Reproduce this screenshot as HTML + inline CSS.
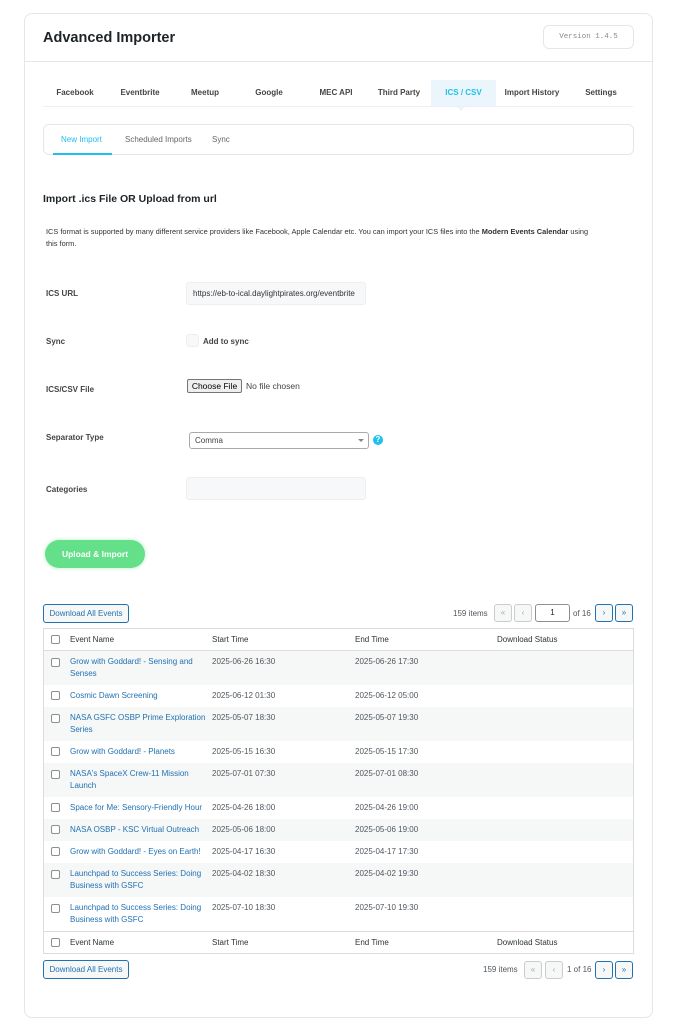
<!DOCTYPE html>
<html><head><meta charset="utf-8"><style>
*{box-sizing:border-box;margin:0;padding:0}
body{width:674px;height:1024px;background:#fff;font-family:"Liberation Sans",sans-serif;position:relative;overflow:hidden;color:#1d2327}
.a{position:absolute;white-space:nowrap}
.box{position:absolute;border:1px solid #e6e6e6;border-radius:6px}
.tab{position:absolute;top:88px;font-size:8px;font-weight:bold;color:#444;text-align:center}
.lbl{position:absolute;left:46px;font-size:8px;font-weight:bold;color:#444}
.inp{position:absolute;background:#f7f8f9;border:1px solid #eee;border-radius:3px}
.btn{position:absolute;border:1px solid #2271b1;border-radius:3px;color:#2271b1;background:#f6f7f7;font-size:8px;text-align:center}
.pg{position:absolute;width:18px;height:18px;border:1px solid #ccc;border-radius:3px;font-size:8px;text-align:center;line-height:16px;color:#a7aaad;background:#f6f7f7}
.pg.b{border-color:#2271b1;color:#2271b1}
.row{position:absolute;left:44px;width:589px;font-size:8px;color:#50575e}
.row.g{background:#f6f7f7}
.cb{position:absolute;left:7px;width:9px;height:9px;border:1px solid #8c8f94;border-radius:2px;background:#fff}
.row .n{position:absolute;left:26px;width:134px;color:#2271b1;line-height:12px;white-space:normal}
.row .s{position:absolute;left:168px}
.row .e{position:absolute;left:311px}
.row .d{position:absolute;left:453px}
</style></head><body>
<div class="box" style="left:24px;top:13px;width:629px;height:1005px;border-radius:8px"></div>
<div class="a" style="left:24px;top:61px;width:629px;border-top:1px solid #e6e6e6"></div>
<div class="a" style="left:43px;top:30px;font-size:14.5px;font-weight:bold;color:#1d2327">Advanced Importer</div>
<div class="box" style="left:543px;top:25px;width:91px;height:24px;font-family:'Liberation Mono',monospace;font-size:7.5px;color:#888;text-align:center;line-height:22px">Version 1.4.5</div>

<div class="a" style="left:431px;top:80px;width:65px;height:26px;background:#eaf6fc"></div>
<div class="a" style="left:456px;top:106px;width:0;height:0;border-left:5px solid transparent;border-right:5px solid transparent;border-top:5px solid #eaf6fc"></div>
<div class="a" style="left:43px;top:106px;width:590px;border-top:1px solid #eee"></div>
<div class="tab" style="left:50px;width:50px">Facebook</div>
<div class="tab" style="left:115px;width:50px">Eventbrite</div>
<div class="tab" style="left:180px;width:50px">Meetup</div>
<div class="tab" style="left:244px;width:50px">Google</div>
<div class="tab" style="left:311px;width:50px">MEC API</div>
<div class="tab" style="left:374px;width:50px">Third Party</div>
<div class="tab" style="left:431px;width:65px;color:#1ec1ec">ICS / CSV</div>
<div class="tab" style="left:500px;width:64px">Import History</div>
<div class="tab" style="left:576px;width:50px">Settings</div>

<div class="box" style="left:43px;top:124px;width:591px;height:31px"></div>
<div class="a" style="left:61px;top:135px;font-size:8px;color:#1ec1ec">New Import</div>
<div class="a" style="left:53px;top:153px;width:59px;height:2px;background:#1ec1ec"></div>
<div class="a" style="left:125px;top:135px;font-size:8px;color:#666">Scheduled Imports</div>
<div class="a" style="left:212px;top:135px;font-size:8px;color:#666">Sync</div>

<div class="a" style="left:43px;top:193px;font-size:10.5px;font-weight:bold">Import .ics File OR Upload from url</div>
<div class="a" style="left:46px;top:226px;font-size:7.4px;line-height:12px;color:#333">ICS format is supported by many different service providers like Facebook, Apple Calendar etc. You can import your ICS files into the <b>Modern Events Calendar</b> using<br>this form.</div>

<div class="lbl" style="top:289px">ICS URL</div>
<div class="inp" style="left:186px;top:282px;width:180px;height:23px;font-size:8px;line-height:21px;padding-left:6px;overflow:hidden;color:#333">https://eb-to-ical.daylightpirates.org/eventbrite</div>
<div class="lbl" style="top:337px">Sync</div>
<div class="inp" style="left:186px;top:334px;width:13px;height:13px"></div>
<div class="a" style="left:203px;top:337px;font-size:8px;font-weight:bold;color:#444">Add to sync</div>
<div class="lbl" style="top:385px">ICS/CSV File</div>
<div class="a" style="left:187px;top:379px;width:55px;height:14px;border:1px solid #767676;border-radius:2px;background:#efefef;font-size:8.5px;line-height:12px;text-align:center;color:#000">Choose File</div>
<div class="a" style="left:246px;top:381px;font-size:8.5px;color:#444">No file chosen</div>
<div class="lbl" style="top:433px">Separator Type</div>
<div class="a" style="left:189px;top:432px;width:180px;height:17px;border:1px solid #aaa;border-radius:3px;font-size:8px;line-height:15px;padding-left:5px;color:#444">Comma</div>
<div class="a" style="left:358px;top:439px;border-left:3px solid transparent;border-right:3px solid transparent;border-top:3px solid #888"></div>
<div class="a" style="left:373px;top:435px;width:10px;height:10px;border-radius:50%;background:#1ec1ec;color:#fff;font-size:8px;font-weight:bold;text-align:center;line-height:10px">?</div>
<div class="lbl" style="top:485px">Categories</div>
<div class="inp" style="left:186px;top:477px;width:180px;height:23px"></div>

<div class="a" style="left:45px;top:540px;width:100px;height:28px;border-radius:14px;background:#64e08a;box-shadow:0 0 4px #b6f0c6;color:#fff;font-size:8.5px;font-weight:bold;text-align:center;line-height:28px">Upload &amp; Import</div>

<div class="btn" style="left:43px;top:604px;width:86px;height:19px;line-height:17px">Download All Events</div>
<div class="a" style="left:453px;top:609px;font-size:8px;color:#50575e">159 items</div>
<div class="pg" style="left:494px;top:604px">«</div>
<div class="pg" style="left:514px;top:604px">‹</div>
<div class="a" style="left:535px;top:604px;width:35px;height:18px;border:1px solid #8c8f94;border-radius:3px;font-size:8px;text-align:center;line-height:16px">1</div>
<div class="a" style="left:573px;top:609px;font-size:8px;color:#50575e">of 16</div>
<div class="pg b" style="left:595px;top:604px">›</div>
<div class="pg b" style="left:615px;top:604px">»</div>

<div class="a" style="left:43px;top:628px;width:591px;height:326px;border:1px solid #dcdcde"></div>
<div class="row" style="top:629px;height:22px;border-bottom:1px solid #dcdcde;color:#2c3338"><div class="cb" style="top:6px"></div><span class="a" style="left:26px;top:6px">Event Name</span><span class="s" style="top:6px">Start Time</span><span class="e" style="top:6px">End Time</span><span class="d" style="top:6px">Download Status</span></div>

<div class="row g" style="top:651px;height:34px"><div class="cb" style="top:7px"></div><div class="n" style="top:5px">Grow with Goddard! - Sensing and Senses</div><span class="s" style="top:6px">2025-06-26 16:30</span><span class="e" style="top:6px">2025-06-26 17:30</span></div>
<div class="row" style="top:685px;height:22px"><div class="cb" style="top:6px"></div><div class="n" style="top:5px">Cosmic Dawn Screening</div><span class="s" style="top:6px">2025-06-12 01:30</span><span class="e" style="top:6px">2025-06-12 05:00</span></div>
<div class="row g" style="top:707px;height:34px"><div class="cb" style="top:7px"></div><div class="n" style="top:5px;white-space:nowrap">NASA GSFC OSBP Prime Exploration<br>Series</div><span class="s" style="top:6px">2025-05-07 18:30</span><span class="e" style="top:6px">2025-05-07 19:30</span></div>
<div class="row" style="top:741px;height:22px"><div class="cb" style="top:6px"></div><div class="n" style="top:5px">Grow with Goddard! - Planets</div><span class="s" style="top:6px">2025-05-15 16:30</span><span class="e" style="top:6px">2025-05-15 17:30</span></div>
<div class="row g" style="top:763px;height:34px"><div class="cb" style="top:7px"></div><div class="n" style="top:5px">NASA's SpaceX Crew-11 Mission Launch</div><span class="s" style="top:6px">2025-07-01 07:30</span><span class="e" style="top:6px">2025-07-01 08:30</span></div>
<div class="row" style="top:797px;height:22px"><div class="cb" style="top:6px"></div><div class="n" style="top:5px;overflow:hidden;white-space:nowrap">Space for Me: Sensory-Friendly Hour</div><span class="s" style="top:6px">2025-04-26 18:00</span><span class="e" style="top:6px">2025-04-26 19:00</span></div>
<div class="row g" style="top:819px;height:22px"><div class="cb" style="top:6px"></div><div class="n" style="top:5px;overflow:hidden;white-space:nowrap">NASA OSBP - KSC Virtual Outreach</div><span class="s" style="top:6px">2025-05-06 18:00</span><span class="e" style="top:6px">2025-05-06 19:00</span></div>
<div class="row" style="top:841px;height:22px"><div class="cb" style="top:6px"></div><div class="n" style="top:5px;overflow:hidden;white-space:nowrap">Grow with Goddard! - Eyes on Earth!</div><span class="s" style="top:6px">2025-04-17 16:30</span><span class="e" style="top:6px">2025-04-17 17:30</span></div>
<div class="row g" style="top:863px;height:34px"><div class="cb" style="top:7px"></div><div class="n" style="top:5px">Launchpad to Success Series: Doing Business with GSFC</div><span class="s" style="top:6px">2025-04-02 18:30</span><span class="e" style="top:6px">2025-04-02 19:30</span></div>
<div class="row" style="top:897px;height:34px"><div class="cb" style="top:7px"></div><div class="n" style="top:5px">Launchpad to Success Series: Doing Business with GSFC</div><span class="s" style="top:6px">2025-07-10 18:30</span><span class="e" style="top:6px">2025-07-10 19:30</span></div>
<div class="row" style="top:931px;height:22px;border-top:1px solid #dcdcde;color:#2c3338"><div class="cb" style="top:6px"></div><span class="a" style="left:26px;top:6px">Event Name</span><span class="s" style="top:6px">Start Time</span><span class="e" style="top:6px">End Time</span><span class="d" style="top:6px">Download Status</span></div>

<div class="btn" style="left:43px;top:960px;width:86px;height:19px;line-height:17px">Download All Events</div>
<div class="a" style="left:483px;top:965px;font-size:8px;color:#50575e">159 items</div>
<div class="pg" style="left:524px;top:961px">«</div>
<div class="pg" style="left:545px;top:961px">‹</div>
<div class="a" style="left:567px;top:965px;font-size:8px;color:#50575e">1 of 16</div>
<div class="pg b" style="left:595px;top:961px">›</div>
<div class="pg b" style="left:615px;top:961px">»</div>
</body></html>
